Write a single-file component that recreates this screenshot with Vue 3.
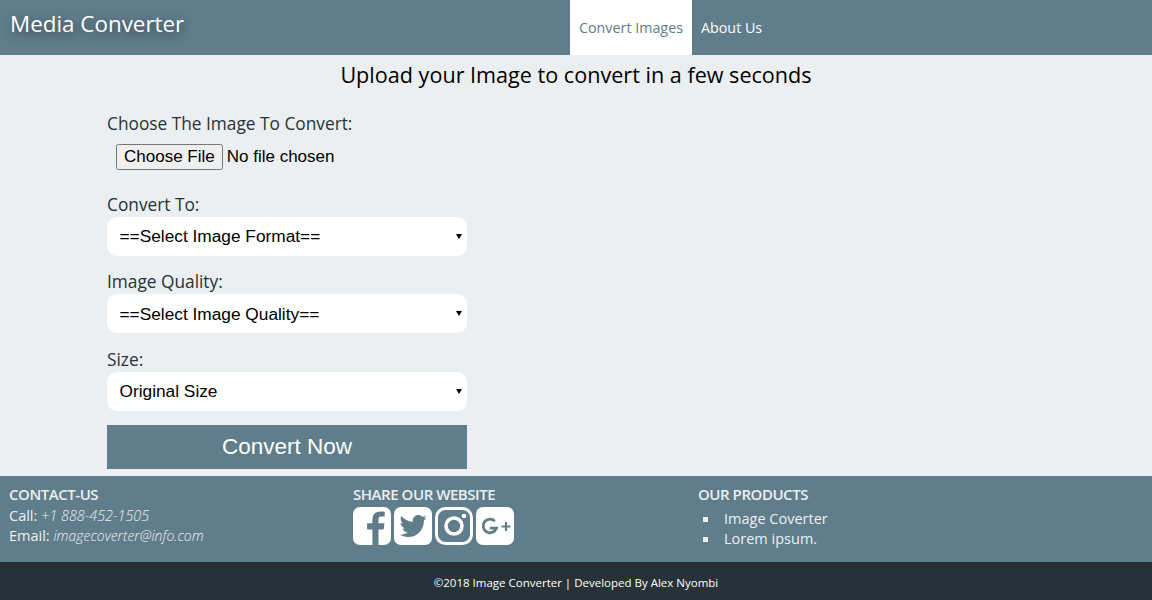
<template>
  <div class="page">
    <header class="topbar">
      <div class="brand">Media Converter</div>
      <nav class="nav">
        <a class="nav-link active" href="#">Convert Images</a>
        <a class="nav-link" href="#">About Us</a>
      </nav>
    </header>

    <main class="content">
      <h1 class="title">Upload your Image to convert in a few seconds</h1>
      <form class="form" @submit.prevent>
        <div class="file-group">
          <label class="field-label">Choose The Image To Convert:</label>
          <input class="file-input" type="file" />
        </div>
        <div v-for="field in fields" :key="field.label" class="field">
          <label class="field-label">{{ field.label }}</label>
          <div class="select-wrap">
            <select class="select">
              <option>{{ field.option }}</option>
            </select>
          </div>
        </div>
        <button class="submit" type="submit">Convert Now</button>
      </form>
    </main>

    <footer class="footer">
      <div class="footer-cols">
        <div class="col">
          <h4 class="col-title">CONTACT-US</h4>
          <div class="line">Call: <em class="phone">+1 888-452-1505</em></div>
          <div class="line">Email: <em>imagecoverter@info.com</em></div>
        </div>
        <div class="col">
          <h4 class="col-title">SHARE OUR WEBSITE</h4>
          <div class="socials">
            <svg class="social" viewBox="0 0 38 38">
              <path fill="#fff" fill-rule="evenodd" d="M7 0h24a7 7 0 0 1 7 7v24a7 7 0 0 1-7 7h-5.500V22.500h5.200l.8-6.300h-6v-3.700c0-1.800.6-3 3.100-3h3.100V4.700c-.6-.1-2.400-.3-4.500-.3-4.600 0-7.800 2.800-7.800 8v3.800h-5.300v6.300h5.300V38H7a7 7 0 0 1-7-7V7a7 7 0 0 1 7-7z" />
            </svg>
            <svg class="social" viewBox="0 0 38 38">
              <rect width="38" height="38" rx="7" fill="#fff" />
              <path fill="#607d8b" transform="translate(5.500 5.500) scale(0.053)" d="M459.37 151.716c.325 4.548.325 9.097.325 13.645 0 138.72-105.583 298.558-298.558 298.558-59.452 0-114.68-17.219-161.137-47.106 8.447.974 16.568 1.299 25.34 1.299 49.055 0 94.213-16.568 130.274-44.832-46.132-.975-84.792-31.188-98.112-72.772 6.498.974 12.995 1.624 19.818 1.624 9.421 0 18.843-1.3 27.614-3.573-48.081-9.747-84.143-51.98-84.143-102.985v-1.299c13.969 7.797 30.214 12.67 47.431 13.319-28.264-18.843-46.781-51.005-46.781-87.391 0-19.492 5.197-37.36 14.294-52.954 51.655 63.675 129.3 105.258 216.365 109.807-1.624-7.797-2.599-15.918-2.599-24.04 0-57.828 46.782-104.934 104.934-104.934 30.213 0 57.502 12.67 76.67 33.137 23.715-4.548 46.456-13.32 66.599-25.34-7.798 24.366-24.366 44.833-46.132 57.827 21.117-2.273 41.584-8.122 60.426-16.243-14.292 20.791-32.161 39.308-52.628 54.253z" />
            </svg>
            <svg class="social" viewBox="0 0 38 38">
              <rect x="1.500" y="1.500" width="35" height="35" rx="9" fill="none" stroke="#fff" stroke-width="3" />
              <circle cx="19" cy="19" r="8" fill="none" stroke="#fff" stroke-width="3.500" />
              <circle cx="29" cy="9" r="2.300" fill="#fff" />
            </svg>
            <svg class="social" viewBox="0 0 38 38">
              <rect width="38" height="38" rx="7" fill="#fff" />
              <path fill="none" stroke="#607d8b" stroke-width="2.800" d="M18.800 14.200a6.800 6.800 0 1 0 1.600 7h-6.600" />
              <path fill="none" stroke="#607d8b" stroke-width="2.200" d="M25.500 19.500h9M30 15v9" />
            </svg>
          </div>
        </div>
        <div class="col">
          <h4 class="col-title">OUR PRODUCTS</h4>
          <ul class="products">
            <li>Image Coverter</li>
            <li>Lorem ipsum.</li>
          </ul>
        </div>
      </div>
      <div class="copyright">©2018 Image Converter | Developed By Alex Nyombi</div>
    </footer>
  </div>
</template>

<script setup>
const fields = [
  { label: "Convert To:", option: "==Select Image Format==" },
  { label: "Image Quality:", option: "==Select Image Quality==" },
  { label: "Size:", option: "Original Size" },
];
</script>

<style>
html,
body {
  margin: 0;
  background: #eceff1;
}
</style>

<style scoped>
.page {
  display: flex;
  flex-direction: column;
  height: 600px;
  overflow: hidden;
  background: #eceff1;
  font-family: "Open Sans", sans-serif;
}
.topbar {
  display: flex;
  justify-content: space-between;
  height: 55px;
  background: #607d8b;
}
.brand {
  padding: 8px 0 0 10px;
  font-size: 22.400px;
  line-height: 32px;
  color: #fff;
  text-shadow: 1px 3px 10px rgba(30, 40, 45, 0.7);
}
.nav {
  display: flex;
  width: 582px;
}
.nav-link {
  padding: 0 9px;
  font-size: 14.300px;
  line-height: 55px;
  color: #fff;
  text-decoration: none;
}
.nav-link.active {
  background: #fff;
  color: #607d8b;
}
.content {
  flex: 1;
}
.title {
  margin: 0;
  padding-top: 5px;
  font-size: 21.600px;
  font-weight: 400;
  line-height: 30px;
  text-align: center;
  color: #000;
}
.form {
  width: 360px;
  margin-left: 107px;
  padding-top: 23px;
}
.file-group {
  margin-bottom: 23.800px;
}
.field-label {
  display: block;
  padding-bottom: 1px;
  font-size: 17.300px;
  line-height: 22px;
  color: #263238;
}
.file-input {
  display: block;
  margin: 8px 0 0 9px;
  font-family: "Liberation Sans", Arial, sans-serif;
  font-size: 17px;
  color: #000;
}
.field {
  margin-bottom: 15.500px;
}
.select-wrap {
  position: relative;
}
.select-wrap::after {
  content: "";
  position: absolute;
  top: 17px;
  right: 5px;
  border-top: 5px solid #000;
  border-left: 3px solid transparent;
  border-right: 3px solid transparent;
  pointer-events: none;
}
.select {
  display: block;
  width: 100%;
  height: 39px;
  padding: 0 12.500px;
  border: none;
  border-radius: 10px;
  appearance: none;
  background-color: #fff;
  font-family: "Liberation Sans", Arial, sans-serif;
  font-size: 17.300px;
  color: #000;
}
.submit {
  display: block;
  width: 100%;
  height: 44px;
  margin-top: -1.500px;
  border: none;
  background: #607d8b;
  font-family: "Liberation Sans", Arial, sans-serif;
  font-size: 22.500px;
  color: #fff;
}
.footer {
  color: #eceff1;
}
.footer-cols {
  display: grid;
  grid-template-columns: 344px 345px 1fr;
  height: 86px;
  padding-left: 9px;
  background: #607d8b;
}
.col {
  padding-top: 8px;
  font-size: 14.500px;
  line-height: 20px;
}
.col-title {
  margin: 0 0 2px;
  font-size: 15px;
  font-weight: 600;
  line-height: 20px;
  letter-spacing: -0.45px;
}
.line em {
  font-size: 14px;
  font-weight: 300;
}
.line em.phone {
  font-size: 14.400px;
}
.socials {
  display: flex;
  gap: 3px;
  margin-top: 3px;
}
.social {
  width: 38px;
  height: 38px;
}
.products {
  margin: 5px 0 0;
  padding-left: 26px;
  list-style: none;
}
.products li {
  position: relative;
}
.products li::before {
  content: "";
  position: absolute;
  top: 8px;
  left: -21px;
  width: 5px;
  height: 5px;
  background: #eceff1;
}
.copyright {
  height: 38px;
  background: #263238;
  font-size: 11.500px;
  line-height: 42px;
  text-align: center;
  color: #fff;
}
</style>
